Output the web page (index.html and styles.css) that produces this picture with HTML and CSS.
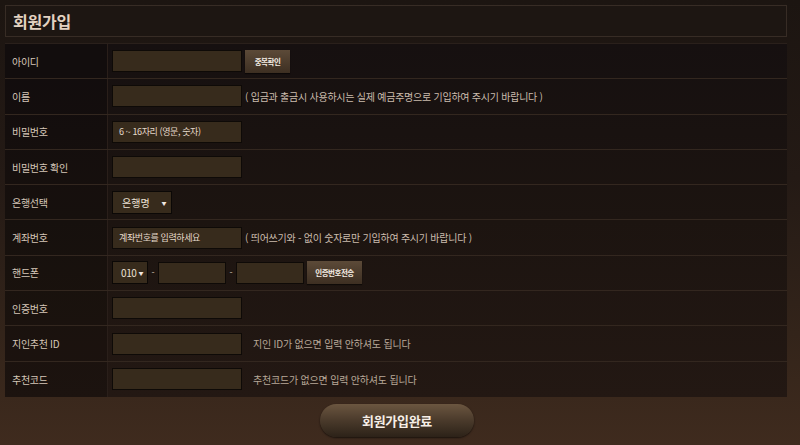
FILE: index.html
```html
<!DOCTYPE html>
<html lang="ko">
<head>
<meta charset="utf-8">
<link rel="stylesheet" href="styles.css">
</head>
<body>
<div class="page">
  <div class="title-box"><h1>회원가입</h1></div>
  <div class="form">
    <div class="row">
      <div class="label">아이디</div>
      <div class="field"><span class="input"></span><span class="btn">중복확인</span></div>
    </div>
    <div class="row">
      <div class="label">이름</div>
      <div class="field"><span class="input"></span><span class="note">( 입금과 출금시 사용하시는 실제 예금주명으로 기입하여 주시기 바랍니다 )</span></div>
    </div>
    <div class="row">
      <div class="label">비밀번호</div>
      <div class="field"><span class="input"><span class="ph">6 ~ 16자리 (영문, 숫자)</span></span></div>
    </div>
    <div class="row">
      <div class="label">비밀번호 확인</div>
      <div class="field"><span class="input"></span></div>
    </div>
    <div class="row">
      <div class="label">은행선택</div>
      <div class="field"><span class="select bank"><span>은행명</span><span class="arrow">▼</span></span></div>
    </div>
    <div class="row">
      <div class="label">계좌번호</div>
      <div class="field"><span class="input"><span class="ph">계좌번호를 입력하세요</span></span><span class="note">( 띄어쓰기와 - 없이 숫자로만 기입하여 주시기 바랍니다 )</span></div>
    </div>
    <div class="row">
      <div class="label">핸드폰</div>
      <div class="field phone">
        <span class="select tel"><span>010</span><span class="arrow">▼</span></span>
        <span class="dash">-</span>
        <span class="input short"></span>
        <span class="dash">-</span>
        <span class="input short"></span>
        <span class="btn wide">인증번호전송</span>
      </div>
    </div>
    <div class="row">
      <div class="label">인증번호</div>
      <div class="field"><span class="input"></span></div>
    </div>
    <div class="row">
      <div class="label">지인추천 ID</div>
      <div class="field"><span class="input"></span><span class="note dim">지인 ID가 없으면 입력 안하셔도 됩니다</span></div>
    </div>
    <div class="row">
      <div class="label">추천코드</div>
      <div class="field"><span class="input"></span><span class="note dim">추천코드가 없으면 입력 안하셔도 됩니다</span></div>
    </div>
  </div>
  <div class="actions"><span class="submit">회원가입완료</span></div>
</div>
</body>
</html>
```

FILE: styles.css
```css
* { box-sizing: border-box; }
html, body { margin: 0; padding: 0; }
body {
  width: 800px;
  height: 445px;
  overflow: hidden;
  background: linear-gradient(180deg, #1c1511 0%, #241a15 40%, #33241a 75%, #3f2b1e 100%);
  font-family: "Noto Sans CJK KR", "Noto Sans", sans-serif;
  color: #d8c9ba;
}
.page {
  padding: 5px 13px 0 5px;
}
.title-box {
  height: 32px;
  border: 1px solid #372c25;
  background: #1d1612;
  display: flex;
  align-items: center;
  padding-left: 7px;
}
.title-box h1 {
  margin: 0;
  font-size: 16px;
  font-weight: 700;
  color: #e3d2c1;
  letter-spacing: -0.2px;
}
.form {
  margin-top: 6px;
  height: 354px;
  display: grid;
  grid-template-rows: repeat(10, 1fr);
  background: linear-gradient(180deg, #161010 0%, #1c1410 50%, #231813 100%);
  border-top: 1px solid #2a201b;
}
.row {
  display: grid;
  grid-template-columns: 103px 1fr;
  border-bottom: 1px solid #33271f;
}
.row:last-child { border-bottom: none; }
.label {
  display: flex;
  align-items: center;
  padding-left: 7px;
  font-size: 10px;
  color: #d6c7b8;
  border-right: 1px solid #2a1f1a;
  background: rgba(0,0,0,0.18);
  letter-spacing: -0.3px;
}
.field {
  display: flex;
  align-items: center;
  padding-left: 4px;
}
.input {
  width: 130px;
  height: 22px;
  background: #372b1c;
  border: 1px solid #0e0a07;
  display: flex;
  align-items: center;
  padding-left: 6px;
}
.input.short { width: 68px; }
.ph {
  font-size: 9px;
  color: #e6dacb;
  letter-spacing: -0.4px;
}
.btn {
  margin-left: 3px;
  height: 23px;
  width: 45px;
  display: flex;
  align-items: center;
  justify-content: center;
  background: linear-gradient(180deg, #5c4a38 0%, #3d2f22 100%);
  color: #f3ece4;
  font-size: 7.5px;
  font-weight: 700;
  letter-spacing: -0.5px;
  box-shadow: 0 1px 1px rgba(0,0,0,0.5);
}
.btn.wide { width: 55px; }
.note {
  margin-left: 3px;
  font-size: 10px;
  color: #cbbcad;
  letter-spacing: -0.25px;
}
.note.dim {
  margin-left: 11px;
  color: #b8a898;
  letter-spacing: -0.2px;
}
.select {
  height: 23px;
  background: #372b1c;
  border: 1px solid #0b0806;
  display: flex;
  align-items: center;
  font-size: 10px;
  color: #ece2d6;
}
.select.bank { width: 60px; padding-left: 9px; }
.select.bank .arrow { margin-left: 12px; }
.select.tel { width: 36px; padding-left: 8px; letter-spacing: -0.4px; }
.select.tel .arrow { margin-left: 2px; }
.arrow { font-size: 5px; color: #f0e8e0; }
.dash {
  width: 10px;
  text-align: center;
  font-size: 9px;
  color: #cbbcad;
}
.phone .btn { margin-left: 3px; }
.actions {
  display: flex;
  justify-content: center;
  padding-top: 7px;
  padding-left: 2px;
}
.submit {
  width: 154px;
  height: 33px;
  border-radius: 17px;
  display: flex;
  align-items: center;
  justify-content: center;
  background: linear-gradient(180deg, #6b5640 0%, #4a3a2b 50%, #2c2218 100%);
  color: #f6eee6;
  font-size: 13px;
  font-weight: 700;
  letter-spacing: -0.3px;
  box-shadow: 0 1px 2px rgba(0,0,0,0.6);
}
```
